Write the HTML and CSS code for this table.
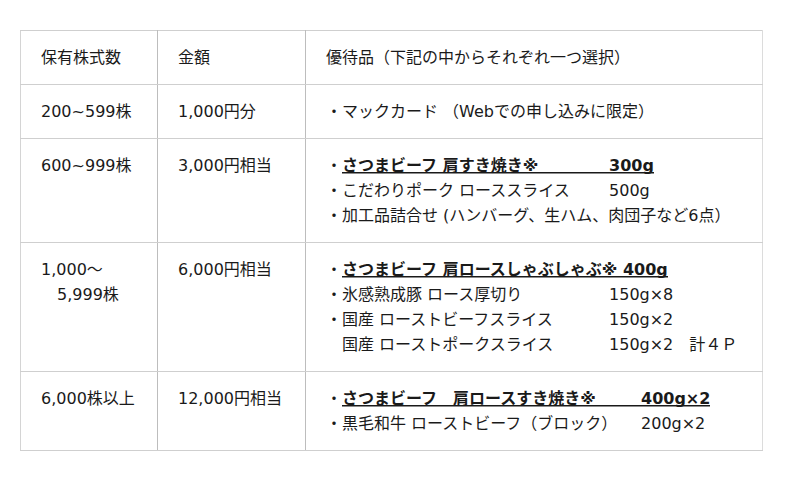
FILE: index.html
```html
<!DOCTYPE html>
<html lang="ja">
<head>
<meta charset="utf-8">
<title>株主優待</title>
<link rel="stylesheet" href="styles.css">
</head>
<body>
<div class="page">
  <table class="yutai">
    <colgroup>
      <col class="c1">
      <col class="c2">
      <col class="c3">
    </colgroup>
    <tr>
      <td>保有株式数</td>
      <td>金額</td>
      <td>優待品（下記の中からそれぞれ一つ選択）</td>
    </tr>
    <tr>
      <td>200~599株</td>
      <td>1,000円分</td>
      <td>・マックカード （Webでの申し込みに限定）</td>
    </tr>
    <tr>
      <td>600~999株</td>
      <td>3,000円相当</td>
      <td class="items w-a">
        <div>・<span class="u"><span class="nm">さつまビーフ 肩すき焼き※</span>300g</span></div>
        <div>・<span class="nm">こだわりポーク ローススライス</span>500g</div>
        <div>・加工品詰合せ (ハンバーグ、生ハム、肉団子など6点）</div>
      </td>
    </tr>
    <tr>
      <td>1,000～<br>　5,999株</td>
      <td>6,000円相当</td>
      <td class="items w-a">
        <div>・<span class="u">さつまビーフ 肩ロースしゃぶしゃぶ※ 400g</span></div>
        <div>・<span class="nm">氷感熟成豚 ロース厚切り</span>150g×8</div>
        <div>・<span class="nm">国産 ローストビーフスライス</span>150g×2</div>
        <div>　<span class="nm">国産 ローストポークスライス</span>150g×2　計４Ｐ</div>
      </td>
    </tr>
    <tr>
      <td>6,000株以上</td>
      <td>12,000円相当</td>
      <td class="items w-b">
        <div>・<span class="u"><span class="nm">さつまビーフ　肩ロースすき焼き※</span>400g×2</span></div>
        <div>・<span class="nm">黒毛和牛 ローストビーフ（ブロック）</span>200g×2</div>
      </td>
    </tr>
  </table>
</div>
</body>
</html>
```

FILE: styles.css
```css
html, body {
  margin: 0;
  padding: 0;
  background: #ffffff;
}

body {
  font-family: "DejaVu Sans", "Noto Sans CJK JP", sans-serif;
  font-size: 16px;
  line-height: 25px;
  color: #1a1a1a;
}

.page {
  padding: 30px 0 0 20px;
}

.yutai {
  border-collapse: collapse;
  table-layout: fixed;
  width: 742px;
}

.c1 { width: 137px; }
.c2 { width: 148px; }
.c3 { width: 457px; }

.yutai td {
  padding: 14px 20px;
  vertical-align: top;
  border-top: 1px solid #cfcfcf;
  border-bottom: 1px solid #cfcfcf;
  border-left: 1px solid #bdbdbd;
  border-right: 1px solid #bdbdbd;
  white-space: nowrap;
}

.yutai td:first-child {
  border-left-color: #d4d4d4;
}

.yutai td:last-child {
  border-right-color: #dcdcdc;
}

.items > div {
  white-space: pre;
}

.nm {
  display: inline-block;
}

.w-a .nm { width: 267px; }
.w-b .nm { width: 299px; }

.u {
  font-weight: bold;
  background-image: linear-gradient(#1a1a1a, #1a1a1a);
  background-repeat: no-repeat;
  background-size: 100% 1.5px;
  background-position: 0 calc(100% - 2px);
}
```
